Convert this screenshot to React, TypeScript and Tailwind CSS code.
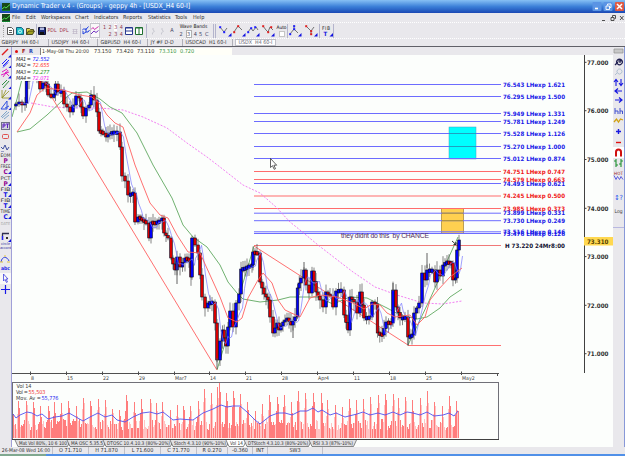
import type { ReactNode } from 'react'
import { clsx } from 'clsx'

type Point = [number, number]

const menus: [string, string][] = [
  ['File', 'w-[14px]'],
  ['Edit', 'w-[15px]'],
  ['Workspaces', 'w-[34px]'],
  ['Chart', 'w-[19px]'],
  ['Indicators', 'w-[29px]'],
  ['Reports', 'w-[25px]'],
  ['Statistics', 'w-[27px]'],
  ['Tools', 'w-[18px]'],
  ['Help', 'w-[16px]'],
]

const chartTabs: [string, string][] = [
  ['GBPJPY  H4 60-I', 'w-[49px]'],
  ['USDJPY  H4 60-I', 'w-[49px]'],
  ['GBPUSD  H4 60-I', 'w-[50px]'],
  ['JY #F D-D', 'w-[35px]'],
  ['USDCAD  H1 60-I', 'w-[50px]'],
]

const levels: [number, string, string][] = [
  [84.5, '76.543 LHexp 1.621', 'blue'],
  [96.5, '76.295 LHexp 1.500', 'blue'],
  [113.5, '75.949 LHexp 1.331', 'blue'],
  [121.5, '75.781 LHexp 1.249', 'blue'],
  [133.5, '75.528 LHexp 1.126', 'blue'],
  [146.5, '75.270 LHexp 1.000', 'blue'],
  [158.5, '75.012 LHexp 0.874', 'blue'],
  [171.5, '74.751 LHexp 0.747', 'red'],
  [179.5, '74.579 LHexp 0.663', 'red'],
  [183.5, '74.493 LHexp 0.621', 'blue'],
  [196, '74.245 LHexp 0.500', 'red'],
  [208.5, '73.985 LHexp 0.373', 'red'],
  [213.2, '73.899 LHexp 0.331', 'blue'],
  [220.7, '73.730 LHexp 0.249', 'blue'],
  [231.8, '73.516 LHexp 0.146', 'blue'],
  [233.5, '73.476 LHexp 0.126', 'blue'],
]

const priceLabels: [number, string][] = [
  [62.3, '77.000'],
  [110.7, '76.000'],
  [159.5, '75.000'],
  [208.3, '74.000'],
  [256.6, '73.000'],
  [305.3, '72.000'],
  [353.7, '71.000'],
]

const dates: [number, string][] = [
  [30.5, '8'],
  [66.5, '15'],
  [102.5, '22'],
  [138.5, '29'],
  [174.5, 'Mar7'],
  [209.5, '14'],
  [245.5, '21'],
  [281.5, '28'],
  [317.5, 'Apr4'],
  [353.5, '11'],
  [389.5, '18'],
  [425.5, '25'],
  [461.5, 'May2'],
]

const closes: Point[] = [
  [13, 106], [16, 104], [19, 102], [22, 105], [25, 103], [26.5, 81], [29, 70], [33, 66], [37, 80],
  [40, 89], [43, 83], [46, 84], [48, 95], [51, 96], [54, 95], [55.5, 84], [58, 92], [61, 91],
  [64, 104], [67, 107], [70, 112], [73, 105], [76, 96], [79, 98], [83, 116], [86, 108], [89, 105],
  [91, 95], [94, 100], [97, 112], [99, 131], [103, 133], [106, 137], [110, 133], [114, 132],
  [117, 132], [120, 147], [122, 176], [125, 181], [128, 195], [133, 193], [135, 222], [138, 217],
  [142, 220], [146, 223], [149, 238], [151, 222], [155, 223], [159, 221], [162, 218], [164, 233],
  [168, 238], [171, 258], [175, 270], [177, 257], [180, 267], [185, 258], [189, 260], [191, 277],
  [192, 238], [195, 245], [198, 253], [200, 275], [202, 297], [205, 308], [208, 303], [212, 302],
  [215, 323], [217, 360], [220, 341], [222.5, 330], [226, 346], [228, 327], [230, 311], [233, 327],
  [236, 303], [239, 294], [241, 269], [245, 268], [249, 266], [252, 265], [253, 252], [257, 253],
  [260, 282], [264, 294], [268, 300], [270, 317], [273, 333], [277, 323], [279, 330], [283, 322],
  [287, 318], [291, 325], [295, 317], [297.5, 288], [301, 278], [304, 270], [306, 285], [309, 293],
  [312, 271], [316, 292], [320, 300], [323, 307], [326, 292], [330, 296], [333, 307], [336, 291],
  [341, 290], [344, 315], [348, 330], [350, 297], [354, 302], [357, 313], [360, 292], [364, 318],
  [369, 317], [372, 302], [375, 304], [377.5, 333], [382, 335], [386, 322], [391, 323], [393, 290],
  [396, 307], [400, 318], [405, 317], [408, 337], [412, 335], [414, 313], [419, 303], [422, 273],
  [425, 280], [427, 270], [432, 270], [435, 282], [437, 270], [440, 276], [443, 265], [447, 262],
  [451, 263], [453, 280], [455.5, 278], [457, 250], [459, 240],
]

const maRed: Point[] = [
  [17, 132], [30, 113], [37, 95], [45, 88], [63, 90], [80, 95], [92, 97], [100, 104], [107, 115],
  [115, 123], [123, 127], [128, 143], [135, 165], [142, 183], [150, 203], [160, 215], [168, 218],
  [177, 235], [188, 252], [200, 253], [210, 275], [220, 297], [228, 318], [237, 322], [242, 318],
  [248, 298], [258, 280], [263, 273], [272, 283], [278, 300], [285, 310], [300, 317], [310, 298],
  [320, 295], [337, 297], [353, 303], [364, 309], [372, 304], [380, 305], [387, 313], [395, 317],
  [410, 315], [417, 325], [425, 317], [430, 300], [438, 290], [450, 277], [462, 268],
]

const maGreen: Point[] = [
  [17, 132], [30, 129], [47, 115], [63, 100], [72, 93], [87, 92], [100, 99], [110, 107], [122, 113],
  [137, 133], [153, 165], [172, 198], [183, 225], [193, 237], [207, 247], [220, 265], [228, 282],
  [237, 293], [243, 299], [260, 302], [278, 300], [290, 297], [317, 297], [333, 304], [350, 297],
  [367, 298], [387, 308], [400, 315], [417, 319], [427, 317], [440, 308], [450, 297], [462, 289],
]

const maMagenta: Point[] = [
  [31, 103], [53, 107], [77, 108], [100, 108], [123, 110], [143, 117], [167, 128], [187, 143],
  [207, 157], [220, 167], [243, 185], [260, 193], [276, 207], [290, 222], [300, 230], [318, 245],
  [340, 262], [353, 272], [375, 287], [397, 295], [423, 303], [443, 304], [462, 301],
]

const volumePeaks: Point[] = [
  [13, 414], [18, 401], [26, 401], [33, 402], [40, 406], [48, 406], [54, 402], [61, 403], [68, 401],
  [76, 406], [83, 398], [90, 401], [98, 399], [105, 400], [112, 409], [119, 410], [126, 395],
  [134, 402], [141, 399], [150, 399], [156, 403], [162, 402], [170, 410], [177, 405], [183, 406],
  [190, 406], [198, 401], [204, 389], [211, 393], [217, 387], [219, 383], [226, 393], [233, 391],
  [240, 394], [247, 402], [255, 411], [262, 404], [269, 395], [277, 397], [284, 395], [291, 402],
  [298, 391], [305, 393], [313, 393], [321, 393], [327, 400], [335, 405], [342, 407], [349, 399],
  [356, 400], [363, 399], [370, 397], [378, 395], [385, 394], [393, 394], [398, 398], [405, 397],
  [412, 400], [420, 398], [427, 391], [434, 402], [442, 406], [449, 396], [456, 401], [458, 411],
]

const volumeAverage: Point[] = [
  [13, 414], [16, 418], [20, 415], [27, 412], [32, 413], [37, 416], [42, 414], [48, 419], [55, 417],
  [62, 416], [69, 413], [76, 417], [83, 421], [90, 417], [98, 413], [105, 417], [112, 415],
  [117, 420], [125, 422], [133, 417], [142, 413], [150, 412], [157, 414], [163, 412], [173, 420],
  [180, 419], [193, 420], [203, 413], [213, 409], [221, 405], [227, 407], [233, 406], [240, 406],
  [247, 412], [255, 420], [260, 424], [270, 416], [278, 413], [285, 413], [292, 415], [300, 411],
  [307, 411], [313, 408], [318, 412], [322, 410], [330, 415], [336, 413], [345, 417], [357, 414],
  [363, 412], [370, 415], [378, 413], [385, 415], [393, 412], [400, 415], [407, 412], [413, 413],
  [420, 415], [427, 412], [434, 416], [443, 415], [449, 413], [454, 416], [458, 411],
]

const toPoints = (points: Point[]) => points.map((p) => p.join(',')).join(' ')

const noise = (n: number) => {
  const v = Math.sin(n * 12.9898) * 43758.5453
  return v - Math.floor(v)
}

// Long gaps between closes are split so that bars stay about 2px apart
const bars = closes.slice(1).flatMap(([x, y], i) => {
  const [px, py] = closes[i]
  const parts = x - px > 3 ? 2 : 1
  return Array.from({ length: parts }, (_, k) => ({
    x: px + ((x - px) * (k + 1)) / parts,
    open: py + ((y - py) * k) / parts,
    close: py + ((y - py) * (k + 1)) / parts,
  }))
})

const maBlue = bars.map((bar, i): Point => {
  const from = bars.slice(Math.max(0, i - 2), i + 1)
  return [bar.x + 3.5, from.reduce((sum, b) => sum + b.close, 0) / from.length]
})

const volumes = Array.from({ length: 446 }, (_, i) => {
  const x = 13 + i
  const peak = volumePeaks.find(([px]) => px === x)
  const before = volumePeaks.find(([px]) => px === x + 1)
  const after = volumePeaks.find(([px]) => px === x - 1)
  if (peak) return { x, top: peak[1], light: false }
  if (after) return { x, top: after[1] + 4 + noise(x) * 8, light: noise(x + 9) > 0.4 }
  if (before) return { x, top: before[1] + 10 + noise(x) * 8, light: noise(x + 4) > 0.4 }
  return { x, top: 419 + noise(x) * 11, light: noise(x + 2) > 0.6 }
})

function Separator() {
  return <div className="h-[14px] w-px shrink-0 bg-[#b4b4cc]" />
}

function Cell({ className, children }: { className: string; children?: ReactNode }) {
  return (
    <div className={clsx('flex h-full shrink-0 items-center justify-center', className)}>
      {children}
    </div>
  )
}

function TitleBar() {
  return (
    <div className="flex h-[13px] items-center bg-linear-to-b from-[#86c0f4] via-[#3c80d8] to-[#1c48b4] pl-[2px] text-white">
      <Logo />
      <span className="ml-[2px] flex-1 font-['DejaVu_Sans_Condensed',sans-serif] text-[6.8px] tracking-[-0.03px]">
        Dynamic Trader v.4 - (Groups) - geppy 4h - [USDX_H4 60-I]
      </span>
      <svg width="33" height="11" viewBox="0 0 33 11" className="shrink-0">
        <rect x="0.5" y="1" width="9" height="9" rx="1" fill="#5a94e4" />
        <path d="M3 7.5h3" stroke="white" strokeWidth="1.6" />
        <rect x="11.5" y="1" width="9" height="9" rx="1" fill="#5a94e4" />
        <path d="M14 5h3.5v3.5H14zM15.5 4.5v-1.500h3.500v3.500h-1.500" fill="none" stroke="white" strokeWidth="0.900" />
        <rect x="23" y="1" width="9" height="9" rx="1" fill="#e05a44" />
        <path d="m25 3 5 5m0-5-5 5" stroke="white" strokeWidth="1.5" />
      </svg>
    </div>
  )
}

function Logo() {
  return (
    <svg width="8" height="8" viewBox="0 0 8 8" className="shrink-0">
      <rect width="8" height="8" fill="#184818" />
      <path d="M0 6l2.500-2 1.500 1 4-3.500" fill="none" stroke="#50e050" />
      <path d="M0 7.500h8" stroke="#108030" />
    </svg>
  )
}

function MenuBar() {
  return (
    <div className="flex h-[9px] items-center pl-[2px] text-[5.500px] text-[#303030]">
      <Logo />
      <div className="ml-[2px] flex flex-1">
        {menus.map(([label, width]) => (
          <span key={label} className={clsx('shrink-0', width)}>
            {label}
          </span>
        ))}
      </div>
      <svg width="26" height="8" viewBox="0 0 26 8" fill="none" stroke="#404040">
        <path d="M3 6.500h3M12 3.500h3v3h-3zM13.500 3v-1.500h3v3h-1M21 2l3.500 4m0-4-3.500 4" strokeWidth="0.9" />
      </svg>
    </div>
  )
}

const waveTools: { line: string; dots: Point[]; color: string; width: string }[] = [
  { line: 'M1 3l4 5 3-4', dots: [[1, 3], [5, 8]], color: '#2020ff', width: 'w-[14px]' },
  { line: 'M1 8l4-6 4 4', dots: [[1, 8], [5, 2]], color: '#e02020', width: 'w-[14px]' },
  { line: 'M1 8l3-4 2 3 3-4 2 3', dots: [[1, 8], [4, 4], [8, 3]], color: '#2020ff', width: 'w-[14px]' },
  { line: 'M1 2l3 4 2 2 2-5 3 3', dots: [[1, 2], [6, 8], [9, 3]], color: '#e02020', width: 'w-[16px]' },
]

function WaveIcon({ line, dots, color }: { line: string; dots: Point[]; color: string }) {
  return (
    <svg width="13" height="13" viewBox="0 0 13 13">
      <path d={line} fill="none" stroke="#555" strokeWidth="0.8" />
      {dots.map(([x, y]) => (
        <rect key={`${x}-${y}`} x={x - 0.8} y={y - 0.8} width="2" height="2" fill={color} />
      ))}
      <path d="M12.500 9v3.500h-3.500z" fill="#1010e0" />
    </svg>
  )
}

function Toolbar() {
  return (
    <div className="flex h-[17px] items-center border-y border-dotted border-white text-[5.5px]">
      <Cell className="w-[6px]">
        <div className="h-3 w-0 border-l border-dotted border-[#a0a0a0]" />
      </Cell>
      <Cell className="w-[9px]">
        <svg width="7" height="8" viewBox="0 0 7 8" fill="white" stroke="#303030">
          <path d="M.5.5h4l2 2v5h-6zM2 3.500h3M2 5.500h3" strokeWidth="0.8" />
        </svg>
      </Cell>
      <Cell className="w-[10px]">
        <svg width="8" height="8" viewBox="0 0 8 8">
          <path d="M.5.5h5l2 2v5h-7z" fill="#20c0c8" stroke="#106080" />
          <circle cx="4" cy="4.500" r="1.500" fill="none" stroke="white" strokeWidth="0.8" />
        </svg>
      </Cell>
      <Cell className="w-[11px]">
        <svg width="9" height="8" viewBox="0 0 9 8">
          <path d="M.5 7.500v-6h3l1 1h3v2" fill="#e0d040" stroke="#303010" strokeWidth="0.8" />
          <path d="M.5 7.500l2-3.500h6l-2 3.500z" fill="#a0a020" stroke="#303010" strokeWidth="0.8" />
        </svg>
      </Cell>
      <Separator />
      <Cell className="w-[9px]">
        <svg width="8" height="8" viewBox="0 0 8 8">
          <path d="M.5.5h7v7h-7z" fill="#182878" stroke="#101030" />
          <path d="M2 .5h4v2.500h-4z" fill="#b0b8e0" />
          <path d="M2 5h4v3h-4z" fill="#101010" />
        </svg>
      </Cell>
      <Cell className="w-[12px] text-[5.2px] text-[#a03048]">PDL</Cell>
      <Cell className="w-[12px] text-[5.2px] text-[#a03048]">DPL</Cell>
      <Cell className="w-[10px]">
        <svg width="6" height="6" viewBox="0 0 6 6" stroke="#c0b8c8">
          <path d="M.5 1.500h5M.5 3.500h5M.5 5.500h5M1.500 1v5M4.500 1v5" strokeWidth="0.7" />
        </svg>
      </Cell>
      <Separator />
      <Cell className="w-[9px]">
        <svg width="8" height="9" viewBox="0 0 8 9" fill="none" stroke="#2040e0">
          <path d="M0 4.500l2-2 1.500 1.500 3-3.500M1 5v3l3-2M4 2v4h2l1.500-2" />
        </svg>
      </Cell>
      <Cell className="w-[10px] border border-[#c4c4cc] bg-white/70">
        <svg width="8" height="9" viewBox="0 0 8 9" fill="none">
          <path d="M0 3.500l2-2 1.500 2 4-3" stroke="#d030b0" />
          <path d="M0 8l3-3 2 1.500 2.500-2" stroke="#7030c0" />
        </svg>
      </Cell>
      <div className="flex w-[24px] shrink-0 flex-col items-end pr-px leading-[7px] text-[#903850]">
        <div className="flex gap-[2.500px]">
          <span>1</span><span>2</span>
          <span className="bg-white">3</span>
          <span>4</span>
        </div>
        <div className="flex gap-[2.500px]">
          <span>2</span><span>3</span><span>4</span>
        </div>
      </div>
      <Cell className="w-[10px]">
        <svg width="8" height="8" viewBox="0 0 8 8" fill="white" stroke="#283890">
          <path d="M.5 .5h7v7h-7zM.5 4h7M.5 1h7" />
        </svg>
      </Cell>
      <Cell className="w-[9px]">
        <svg width="8" height="8" viewBox="0 0 8 8" fill="white" stroke="#207030">
          <path d="M.5 .5h7v7h-7zM4 .5v7M.5 1h7" />
        </svg>
      </Cell>
      <Cell className="w-[6px]"><Separator /></Cell>
      <Cell className="w-[18px]">
        <svg width="14" height="8" viewBox="0 0 14 8" fill="none" stroke="#c8c8d0">
          <path d="M2 1v2l1.500 1-2 2v1.500M11 1v2l1.500 1-2 2v1.500" />
        </svg>
      </Cell>
      <Cell className="w-[10px] text-[#404060]">A</Cell>
      <div className="flex w-[33px] shrink-0 flex-col items-center leading-[7px]">
        <div className="text-[5px] whitespace-nowrap text-[#202020]">Wave Bands</div>
        <div className="flex items-center gap-[2px] text-[#404060]">
          <span className="px-px">2</span>
          <span className="border border-[#b0b0b0] bg-white px-[0.500px] leading-[6px]">3</span>
          <span>4</span><span>5</span>
          <span className="pl-px">C</span>
        </div>
      </div>
      <Cell className="w-[8px] gap-px"><Separator /><Separator /></Cell>
      {waveTools.map(({ width, ...tool }) => (
        <Cell key={tool.line} className={width}>
          <WaveIcon {...tool} />
        </Cell>
      ))}
      <div className="flex w-[11px] shrink-0 flex-col items-center">
        <span className="text-[4.800px] leading-[6px]">Auto</span>
        <div className="size-[6px] border border-[#c4c4c4] bg-white" />
      </div>
      <Separator />
      <Cell className="w-[15px]">
        <WaveIcon line="M1 10l4-5 4 4M5 1v5" dots={[[5, 2], [5, 5], [1, 10]]} color="#2020ff" />
      </Cell>
      <Cell className="w-[16px]">
        <WaveIcon line="M1 2l5 5 3-4M6 6v5" dots={[[1, 2], [6, 7], [6, 10]]} color="#e02020" />
      </Cell>
      <Separator />
      <Cell className="w-[13px]">
        <svg width="12" height="13" viewBox="0 0 12 13">
          <text x="1" y="5.500" fontSize="5" textLength="8" fill="#303030">FIB</text>
          <text x="2.500" y="11.500" fontSize="6" fontWeight="bold" fill="#1010e0">T</text>
          <path d="M12 9v3.500h-3.500z" fill="#1010e0" />
        </svg>
      </Cell>
      <Separator />
    </div>
  )
}

function ChartTabs() {
  return (
    <div className="flex h-[8px] items-center border-b border-[#606068] text-[5.300px] whitespace-pre text-[#383838]">
      {chartTabs.map(([label, width], i) => (
        <div
          key={label}
          className={clsx('h-[7px] shrink-0 border-r border-[#b0b0b8] leading-[7px]', width, i ? 'pl-[2.500px]' : 'pl-[1.500px]')}
        >
          {label}
        </div>
      ))}
      <div className="ml-[2px] h-[7px] w-[41px] border border-[#c0c0c8] bg-white text-center leading-[5px] text-[#606070]">
        USDX  H4 60-I
      </div>
    </div>
  )
}

const textTools: [string, string, string][] = [
  ['EOM', 'P', '#900090'],
  ['FREE', 'C', '#900090'],
  ['PCT', 'P', '#900090'],
  ['FIB', 'T', '#1010e0'],
  ['FIB', 'T', '#1010e0'],
  ['TIME', 'C', '#1010e0'],
]

const drawTools: { icon: ReactNode; corner?: boolean }[] = [
  { icon: <path d="M2 8l6-6" stroke="#e02020" strokeWidth="1.5" />, corner: true },
  { icon: <path d="M2 6l5-5M3 8l6-6M3 9.500l5-5" stroke="#2020ff" />, corner: true },
  { icon: <path d="M2 4l5-3M3 9l5-7M1 7l8-3M5 4l4 4" stroke="#e020c0" />, corner: true },
  { icon: <path d="M2 6l5-5M3 9l6-7" stroke="#309040" />, corner: true },
  { icon: <path d="M2 1v8h8M2 9l7-7M2 9l4-8" stroke="#909020" strokeWidth="0.8" />, corner: true },
  { icon: <path d="M1 9l6-8v8zM5 8l4-2" stroke="#3050e0" />, corner: true },
  { icon: <path d="M1 7l6-6M2 8l7-6M4 9l5-4" stroke="#6090c0" strokeWidth="0.8" /> },
  {
    icon: (
      <>
        <rect x="1.500" y="1.500" width="8" height="7" stroke="#707088" fill="#d0d0e0" />
        <path d="M3 7v-4h2v2h-2M6 3h3M7.500 3v4" stroke="#6020c0" />
      </>
    ),
  },
  { icon: <rect x="2.500" y="3.500" width="6" height="4" rx="1" stroke="#e05050" /> },
  { icon: <path d="M1 5l2 2 2-4 2 5 2-3M1 10h3" stroke="#4050a0" /> },
]

function LeftToolbar() {
  return (
    <div className="flex w-[12px] shrink-0 flex-col border-r border-[#a0a0d8] bg-[#e9e8ec]">
      {drawTools.map(({ icon, corner }, i) => (
        <svg key={i} width="11" height="10.500" viewBox="0 0 11 10.500" fill="none" className="shrink-0">
          {icon}
          {corner && <path d="M11 7.500v3h-3z" fill="#1010e0" />}
        </svg>
      ))}
      {textTools.map(([top, letter, color], i) => (
        <svg key={i} width="11" height="11.300" viewBox="0 0 11 11.300" className="shrink-0">
          <text x="0.500" y="4.800" fontSize="4.800" textLength="10" lengthAdjust="spacingAndGlyphs" fill="#303030">
            {top}
          </text>
          <text x="3.500" y="10.600" fontSize="6.500" fontWeight="bold" fill={color}>
            {letter}
          </text>
          {i > 0 && <path d="M11 8v3h-3z" fill="#1010e0" />}
        </svg>
      ))}
      <div className="h-[11px] shrink-0 text-center text-[4px] leading-[7px] text-[#a8a8a8]">DATE</div>
      <svg width="11" height="11" viewBox="0 0 11 11" fill="none" className="shrink-0">
        <path d="M2.500 9v-6.500M2 2.500h7" stroke="#303050" strokeWidth="1.300" />
        <path d="M2.500 5v4" stroke="#2020ff" strokeWidth="1.300" />
        <path d="M6 6h2v2h-2z" fill="#303030" />
        <path d="M11 8v3h-3z" fill="#1010e0" />
      </svg>
      <div className="h-[12px] shrink-0 overflow-hidden text-center text-[3.800px] leading-[4px] text-[#3030a0]">
        circle
        <br />
        accord
      </div>
      <svg width="11" height="10" viewBox="0 0 11 10" fill="none" className="shrink-0">
        <path d="M1 8c1-6 6-6 8-1" stroke="#3040e0" />
        <path d="M0 8h3M7 8h3M5 1v2" stroke="#e0c040" />
      </svg>
      <div className="h-[9px] shrink-0 text-center text-[5px] leading-[9px] font-bold text-[#1818e8]">abc</div>
      <svg width="11" height="11" viewBox="0 0 11 11" className="shrink-0 bg-white/70">
        <path d="M3.500 1v7l1.500-1.500 1.500 3 1-.5-1.500-3h2z" fill="none" stroke="#4040e0" strokeWidth="0.800" />
      </svg>
      <svg width="11" height="10" viewBox="0 0 11 10" className="shrink-0">
        <path d="M5.500 1v9M1 5.500h9" stroke="#1818e8" strokeWidth="1.200" />
      </svg>
    </div>
  )
}

const sideTools: [number, ReactNode][] = [
  [8, <path d="M1 2h9v4h-9z" fill="#c8c8c8" stroke="#909090" strokeWidth="0.700" />],
  [11, <path d="M2 10l3-3M8.500 5a2.800 2.800 0 1 1-4 0 2.800 2.800 0 0 1 4 0M5 6h4M7 4v4" stroke="#202050" strokeWidth="1.200" />],
  [11, <path d="M2 9l2-2M8.500 4a2.500 2.500 0 1 1-4 0 2.500 2.500 0 0 1 4 0" stroke="#b0c0d0" />],
  [10, <path d="M3 9v-6M1 5l2-2.500 2 2.500M8 2v6M6 6l2 2.500 2-2.500" stroke="#1818e0" strokeWidth="1.100" />],
  [9, <path d="M2 4h7M5 1.500l-3 2.500 3 2.500" stroke="#1818e0" strokeWidth="1.200" />],
  [10, <path d="M2 4h7M6 1.500l3 2.500-3 2.500" stroke="#1818e0" strokeWidth="1.200" />],
  [10, <path d="M2 8v-6M2 5h3v3M7 8v-6M7 5h2.500v3" stroke="#4050d0" />],
  [10, <path d="M1 6l2.500-3 2 3 2-3 2.500 1" stroke="#d0a010" strokeWidth="1.300" />],
  [12, <path d="M5.500 3v5M3 5.500h5" stroke="#1818e0" strokeWidth="1.400" />],
  [9, <path d="M3 4.500h5" stroke="#e01010" strokeWidth="1.400" />],
  [11, <path d="M3 9.500v-4.500a2.500 2.500 0 0 1 5 0v4.500" stroke="#d01010" strokeWidth="2" />],
  [11, <path d="M3 1v8M1 3h2M3 7h2M8 1v8M6 6h2M8 3h2" stroke="#209030" strokeWidth="1.100" />],
]

function RightToolbar() {
  return (
    <div className="flex w-[12px] shrink-0 flex-col border-r border-[#8898d8] bg-[#e9e8ec]">
      {sideTools.map(([height, icon], i) => (
        <svg
          key={i}
          width="11"
          height={height}
          viewBox={`0 0 11 ${height}`}
          fill="none"
          className={clsx('shrink-0', i === 10 && 'bg-white')}
        >
          {icon}
        </svg>
      ))}
      <svg width="11" height="16" viewBox="0 0 11 16" className="shrink-0">
        <text x="1" y="5.500" fontSize="4.500" textLength="9" fill="#902020">HOT</text>
        <path d="M1 6.500l2 4 1.500-3 2 3 1.500-3 2 3" fill="none" stroke="#6060e0" />
      </svg>
      <div className="h-[20px] shrink-0 pt-[9px] text-center text-[7px] leading-[9px] text-[#2050f0]">↕?</div>
      <div className="h-[23px] shrink-0 border-b border-[#b8b8e0] pt-[4px] text-center text-[5px] text-[#404040]">Log</div>
    </div>
  )
}

function QuoteRow() {
  return (
    <div className="flex h-[8px] shrink-0 items-center bg-[#e9e8ec] text-[5.500px] leading-[8px]">
      <span className="ml-[3px] size-[3px] rounded-full bg-[#e01010]" />
      <span className="ml-[4px] w-[7px] font-bold text-[#a01010]">F</span>
      <span className="w-[11px] font-bold text-[#2040b0]">R</span>
      <div className="flex h-[7px] w-[192px] items-center border-l border-[#808080] bg-[#fffff8] pl-px leading-[7px] text-[#303030]">
        <span className="w-[52px] text-[5.200px] whitespace-nowrap">1-May-08 Thu 20:00</span>
        <span className="w-[22px]">73.150</span>
        <span className="w-[21px]">73.420</span>
        <span className="w-[22px]">73.110</span>
        <span className="w-[21px] text-[#309040]">73.310</span>
        <span className="text-[#309040]">0.720</span>
      </div>
    </div>
  )
}

function PriceChart() {
  return (
    <svg width="601" height="327" viewBox="12 55 601 327" className="block shrink-0">
      <clipPath id="plot">
        <rect x="12" y="81" width="490" height="292" />
      </clipPath>
      <rect x="449" y="127" width="27" height="32" fill="#00ffff" stroke="#40a0c0" strokeWidth="0.500" />
      <rect x="441.500" y="208.500" width="22" height="25" fill="#ffd050" stroke="#a08030" strokeWidth="0.700" />

      <g strokeWidth="1">
        {levels.map(([y, label, color]) => (
          <path key={label} d={`M254 ${y}H501`} stroke={color === 'blue' ? '#6c6cff' : '#ff6c6c'} />
        ))}
        <path d="M449 133.500h27M449 146.500h27" stroke="#20a0c0" />
        <path d="M442 213.200h21M442 220.700h21" stroke="#b89820" />
        <path d="M254 245.500H501" stroke="#f07878" />
        <path d="M408 345.500H501" stroke="#ff7070" />
      </g>

      <g clipPath="url(#plot)" fill="none" strokeWidth="0.900">
        <polyline points={toPoints(maMagenta)} stroke="#f070f0" strokeDasharray="2 1.500" />
        <polyline points={toPoints(maGreen)} stroke="#60a860" />
        <path d="M12 117l5-18 5-20M217 370l9-30 28-94M408 345l22-46 18-40 10-22" stroke="#60a860" />
        <path d="M42 81L217 370M254 246L408 345" stroke="#ff6060" />

        {bars.map(({ x, open, close }, i) => {
          const top = Math.min(open, close)
          const height = Math.max(Math.abs(open - close), 1.500)
          const flat = Math.abs(open - close) < 2
          return (
            <g key={i}>
              <path
                d={`M${x} ${top - 2 - noise(i) * 7}V${top + height + 2 + noise(i + 50) * 7}`}
                stroke="#505050"
                strokeWidth="0.700"
              />
              <rect
                x={x - 1.300}
                y={flat ? top - 1 : top}
                width="2.600"
                height={flat ? height + 2 : height}
                fill={close > open ? '#d80000' : '#0000f8'}
                stroke="#080820"
                strokeWidth="0.600"
              />
            </g>
          )
        })}
        <path d="M408 337v8M217 358v11M393 283v8M427 253v15M177 262v22M304 262v8M293 325v13" stroke="#505050" />
        <polyline points={toPoints(maBlue)} stroke="#7878ff" strokeWidth="0.700" />
        <polyline points={toPoints(maRed)} stroke="#ff6060" />
        <path d="M452 241l4 3.500m0-2.500v2.500h-2.500" stroke="#202020" />
      </g>

      <g fontFamily="DejaVu Sans Condensed, sans-serif" fontSize="5.500" fontStyle="italic" fill="#303030">
        {[
          ['MA1', '72.552', '#2020ff', 60.8],
          ['MA2', '72.655', '#ff3030', 67.3],
          ['MA3', '72.277', '#209020', 73.5],
          ['MA4', '72.071', '#f020f0', 80],
        ].map(([name, value, color, y]) => (
          <g key={name}>
            <text x="16" y={y} textLength="15">{`${name} =`}</text>
            <text x="32.500" y={y} textLength="17" fill={String(color)}>{value}</text>
          </g>
        ))}
      </g>

      <g fontFamily="DejaVu Sans, sans-serif" fontSize="6" fontWeight="bold">
        {levels.map(([y, label, color]) => (
          <text key={label} x="503" y={y + 2.100} textLength="62" lengthAdjust="spacingAndGlyphs" fill={color === 'blue' ? '#1818e8' : '#f01818'}>
            {label}
          </text>
        ))}
        <text x="505" y="248" textLength="60" lengthAdjust="spacingAndGlyphs" fill="#101030">
          H 73.220 24Mr8:00
        </text>
        <path d="M584.500 55V373" stroke="#404040" />
        <rect x="584" y="237" width="29" height="8.500" fill="#ffd850" />
        {priceLabels.map(([y, label]) => (
          <g key={label}>
            <path d={`M584 ${y}h2.500`} stroke="#404040" />
            <text x="587" y={y + 2.300} fontSize="6.200" textLength="21.500" lengthAdjust="spacingAndGlyphs" fill="#303030">
              {label}
            </text>
          </g>
        ))}
        <text x="587" y="243.600" fontSize="6.200" textLength="21.500" lengthAdjust="spacingAndGlyphs" fill="#504000">
          73.310
        </text>
      </g>

      <text x="341" y="238.300" fontFamily="Liberation Sans, sans-serif" fontSize="6.800" textLength="88" fill="#503060" xmlSpace="preserve">
        they didnt do this  by CHANCE
      </text>

      <g fontFamily="DejaVu Sans Condensed, sans-serif" fontSize="5.200" fill="#404040">
        <path d="M12 373.500H499" stroke="#505050" />
        {dates.map(([x, label]) => (
          <g key={label}>
            <path d={`M${x} 371.500v3.500`} stroke="#505050" />
            <text x={x + 0.500} y="380">{label}</text>
          </g>
        ))}
        <path d="M497.500 373v3" stroke="#505050" />
      </g>

      <path d="M270.500 158.500v9l2-1.800 1.700 3.600 1.300-.6-1.600-3.500h2.800z" fill="white" stroke="#202020" strokeWidth="0.700" />
    </svg>
  )
}

function VolumeChart() {
  return (
    <svg width="487" height="58" viewBox="12 382 487 58" className="block shrink-0">
      <g shapeRendering="crispEdges">
        <path d="M12.500 440V382.500H498.500V440" fill="none" stroke="#707078" />
        <path d="M12 439.500H499" stroke="#404040" />
        {volumes.map(({ x, top, light }) => (
          <rect key={x} x={x} y={top} width="1" height={438 - top} fill={light ? '#ffc4c4' : '#ff7c7c'} />
        ))}
      </g>
      <polyline points={toPoints(volumeAverage)} fill="none" stroke="#5050f0" strokeWidth="0.900" />
      <g fontFamily="DejaVu Sans Condensed, sans-serif" fontSize="5.500" fill="#404040">
        <text x="16.500" y="387.800" textLength="15">Vol 14</text>
        <text x="16" y="394" textLength="12">Vol =</text>
        <text x="28.500" y="394" textLength="17" fill="#f03030">55,503</text>
        <text x="16" y="400.200" textLength="25">Mov. Av =</text>
        <text x="41.500" y="400.200" textLength="17" fill="#2828f0">55,776</text>
      </g>
    </svg>
  )
}

const indicatorTabs: [number, number, string][] = [
  [19, 67, 'Mat Vol 80%, 10 6 100'],
  [71, 103, 'MA OSC 5.35.5'],
  [107, 170, 'DTOSC 10.4.10.3 (80%-20%)'],
  [174, 226, 'Stoch 4.3.10 (90%-10%)'],
  [230, 243, 'Vol 14'],
  [248, 308, 'DTStoch 4.3.10.3 (80%-20%)'],
  [313, 353, 'RSI 3.3 (87%-10%)'],
]

function IndicatorTabs() {
  return (
    <svg width="601" height="7" viewBox="12 440 601 7" className="block shrink-0">
      {indicatorTabs.map(([from, to, label]) => (
        <g key={label}>
          <path
            d={`M${from - 4} 440l3 6.500H${to + 0.5}l3-6.500`}
            fill={label === 'Vol 14' ? 'white' : '#e0e0e4'}
            stroke="#404040"
            strokeWidth="0.600"
          />
          <text x={from} y="445.200" fontFamily="DejaVu Sans Condensed, sans-serif" fontSize="5.200" textLength={to - from} lengthAdjust="spacingAndGlyphs" fill="#303030">
            {label}
          </text>
        </g>
      ))}
    </svg>
  )
}

const statusCells: [string, string][] = [
  ['26-Mar-08 Wed 16:00', 'w-[53px] text-[5px]'],
  ['O 71.710', 'w-[36px]'],
  ['H 71.870', 'w-[36px]'],
  ['L 71.600', 'w-[36px]'],
  ['C 71.770', 'w-[36px]'],
  ['R 0.270', 'w-[31px]'],
  ['-0.360', 'w-[25px]'],
  ['INT', 'w-[15px]'],
  ['SW3', 'w-[55px]'],
]

function StatusBar() {
  return (
    <div className="flex h-[7px] shrink-0 items-center bg-[#e9e8ec] text-[5.500px] leading-[7px] text-[#303030]">
      {statusCells.map(([label, width]) => (
        <div key={label} className={clsx('shrink-0 border-r border-[#c0c0c8] text-center whitespace-nowrap', width)}>
          {label}
        </div>
      ))}
    </div>
  )
}

export default function App() {
  return (
    <div className="flex h-[456px] w-[625px] flex-col overflow-hidden bg-[#e9e8ec] font-['DejaVu_Sans_Condensed','DejaVu_Sans',sans-serif] leading-none">
      <TitleBar />
      <MenuBar />
      <Toolbar />
      <ChartTabs />
      <div className="flex h-[400px] shrink-0">
        <LeftToolbar />
        <div className="flex w-[601px] shrink-0 flex-col bg-[#fcfefc]">
          <QuoteRow />
          <PriceChart />
          <VolumeChart />
          <IndicatorTabs />
        </div>
        <RightToolbar />
      </div>
      <StatusBar />
      <div className="flex h-[2px] shrink-0 bg-[#5090e8]">
        <div className="w-[46px] bg-[#80a890]" />
      </div>
    </div>
  )
}
